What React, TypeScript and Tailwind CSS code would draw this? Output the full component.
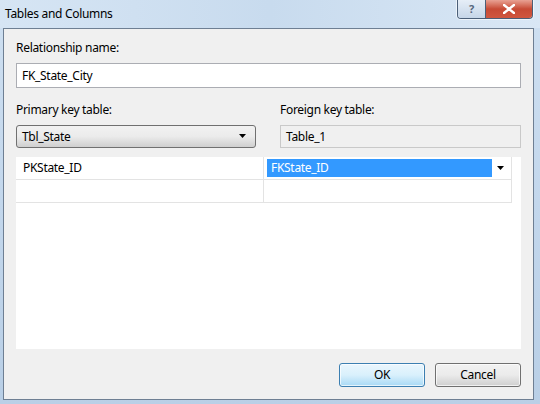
import React from 'react';

const font = { fontFamily: '"Noto Sans", "Open Sans", sans-serif', letterSpacing: '-0.3px' };

const Arrow = () => (
  <svg width="8" height="5" viewBox="0 0 8 5">
    <path d="M0 0h7L3.5 4z" fill="#000" />
  </svg>
);

const App = () => {
  return (
    <div
      className="w-[540px] h-[404px] flex flex-col bg-gradient-to-b from-[#cfe0f1] via-[#c3d7ec] to-[#b9cfe6] text-[12px] text-black overflow-hidden"
      style={font}
    >
      {/* title bar */}
      <div className="h-[28px] flex items-start relative bg-gradient-to-r from-[#d6e5f4] via-[#c8dbee] to-[#d9e7f5]">
        <span className="mt-[5px] ml-[5px] text-[12px] text-black">Tables and Columns</span>
        <div className="ml-auto mr-[7px] flex h-[19px] border border-t-0 border-[#4b5f78] rounded-b-[4px] overflow-hidden shadow-[0_0_0_1px_rgba(255,255,255,0.6)]">
          <div className="w-[28px] flex items-center justify-center bg-gradient-to-b from-[#e6eef7] to-[#c6d6e8] border-r border-[#4b5f78] text-[#56677d] text-[11px] font-bold">
            ?
          </div>
          <div className="w-[46px] flex items-center justify-center bg-gradient-to-b from-[#e8a193] via-[#c74a35] to-[#d0573f]">
            <svg width="12" height="10" viewBox="0 0 12 10">
              <path d="M1 1l10 8M11 1L1 9" stroke="#fff" strokeWidth="2.4" strokeLinecap="round" />
            </svg>
          </div>
        </div>
      </div>

      {/* client area */}
      <div className="mx-[3px] mr-[6px] mb-[4px] flex-1 bg-[#f0f0f0] border border-[#6e7f93] flex flex-col px-[12px]">
        <div className="mt-[11px] h-[15px] leading-[15px]">Relationship name:</div>
        <div className="mt-[8px] h-[25px] border border-[#abadb3] bg-white flex items-center px-[5px]">FK_State_City</div>

        <div className="mt-[14px] flex gap-[24px]">
          <div className="w-[240px] flex flex-col">
            <div className="h-[15px] leading-[15px]">Primary key table:</div>
            <div className="mt-[8px] h-[23px] border border-[#707070] rounded-[3px] bg-gradient-to-b from-[#f2f2f2] via-[#ebebeb] to-[#cfcfcf] flex items-center pl-[5px] pr-[8px]">
              <span>Tbl_State</span>
              <span className="ml-auto flex"><Arrow /></span>
            </div>
          </div>
          <div className="flex-1 flex flex-col">
            <div className="h-[15px] leading-[15px]">Foreign key table:</div>
            <div className="mt-[8px] h-[23px] border border-[#c9c9c9] bg-[#f0f0f0] flex items-center px-[5px]">Table_1</div>
          </div>
        </div>

        {/* column grid */}
        <div className="mt-[9px] h-[192px] bg-white">
          <div className="w-[496px] grid grid-cols-[248px_248px] border-r border-[#e3e3e3]">
            <div className="h-[23px] flex items-center px-[7px] border-b border-r border-[#e3e3e3]">PKState_ID</div>
            <div className="h-[23px] flex items-center border-b border-[#e3e3e3] pl-[3px] pr-[7px]">
              <div className="w-[225px] h-[18px] bg-[#3399ff] text-white flex items-center px-[4px]">FKState_ID</div>
              <span className="ml-auto flex"><Arrow /></span>
            </div>
            <div className="h-[23px] border-b border-r border-[#e3e3e3]" />
            <div className="h-[23px] border-b border-[#e3e3e3]" />
          </div>
        </div>

        <div className="mt-[14px] flex justify-end gap-[10px]">
          <button className="w-[86px] h-[24px] rounded-[3px] border border-[#3c7fb1] bg-gradient-to-b from-[#eaf6fd] via-[#d9f0fc] to-[#a7d9f5] shadow-[inset_0_0_0_1px_rgba(255,255,255,0.7)]">
            OK
          </button>
          <button className="w-[86px] h-[24px] rounded-[3px] border border-[#707070] bg-gradient-to-b from-[#f2f2f2] via-[#ebebeb] to-[#cfcfcf] shadow-[inset_0_0_0_1px_rgba(255,255,255,0.7)]">
            Cancel
          </button>
        </div>
      </div>
    </div>
  );
};

export default App;
